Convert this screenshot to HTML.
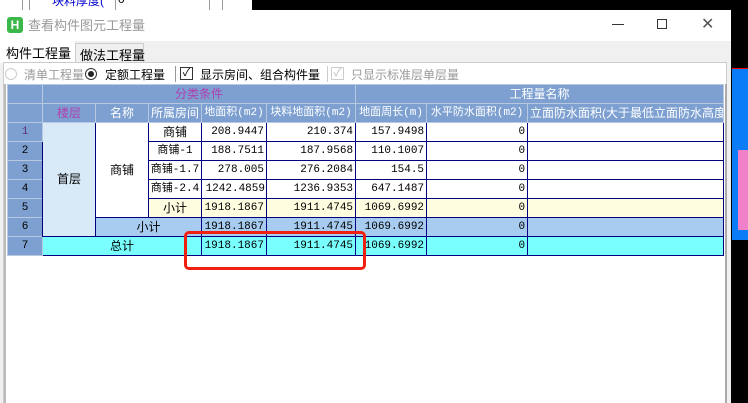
<!DOCTYPE html>
<html><head><meta charset="utf-8"><style>
*{margin:0;padding:0;box-sizing:border-box}
body{width:748px;height:403px;overflow:hidden;background:#000;position:relative;font-family:"Liberation Sans","Noto Sans CJK SC",sans-serif;font-size:12px}
.a{position:absolute}
table{border-collapse:collapse;position:absolute;left:7px;top:84px;width:716px;table-layout:fixed;font-family:"Liberation Sans","Noto Sans CJK SC",sans-serif;font-size:12px}
td{height:19px;padding:0 2px;white-space:nowrap;overflow:hidden;border:1px solid #000080;line-height:17px}
.h td{background:#7da0d0;color:#fff;border:1px solid #b8c8e0;text-align:center}
.n{background:#7da0d0!important;color:#000;text-align:center;border:1px solid #b8c8e0!important;font-family:"Liberation Mono",monospace;font-size:11px}
.r{text-align:right;font-family:"Liberation Mono",monospace;font-size:11px}
.c{text-align:center}
.m{font-family:"Liberation Mono","Noto Sans CJK SC",monospace;font-size:11px}
.y td{background:#fffde0}
.b td{background:#a8ccf0}
.t td{background:#7affff}
</style></head><body>
<div class="a" style="left:0;top:0;width:252px;height:10px;background:#fff;overflow:hidden">
<div class="a" style="left:22px;top:0;width:1px;height:10px;background:#999"></div>
<div class="a" style="left:29px;top:0;width:1px;height:10px;background:#999"></div>
<div class="a" style="left:52px;top:-8px;color:#00c;font-size:12px">块料厚度(</div>
<div class="a" style="left:115px;top:0;width:1px;height:10px;background:#999"></div>
<div class="a" style="left:118px;top:-8px;font-size:12px">0</div>
<div class="a" style="left:209px;top:0;width:1px;height:10px;background:#999"></div>
<div class="a" style="left:222px;top:0;width:1px;height:10px;background:#999"></div>
</div>
<div class="a" style="left:732px;top:68px;width:16px;height:172px;background:#0a7cf8;border-top:1px solid #f00"></div>
<div class="a" style="left:738px;top:150px;width:10px;height:80px;background:#f080c8"></div>
<div class="a" style="left:0;top:10px;width:731px;height:393px;background:#fff">
<div class="a" style="left:7px;top:7px;width:16px;height:16px;background:#3cb84a;border-radius:3px;color:#fff;font-weight:bold;font-size:12px;text-align:center;line-height:16px">H</div>
<div class="a" style="left:28px;top:5px;color:#999;font-size:13px">查看构件图元工程量</div>
<div class="a" style="left:612px;top:14px;width:12px;height:1px;background:#333"></div>
<div class="a" style="left:657px;top:9px;width:10px;height:10px;border:1px solid #333"></div>
<div class="a" style="left:701px;top:4px;font-size:16px;color:#555">✕</div>
<div class="a" style="left:0;top:31px;width:731px;height:362px;background:#f0f0f0"></div>
<div class="a" style="left:0;top:31px;width:75px;height:22px;background:#fff"></div>
<div class="a" style="left:6px;top:33px;font-size:13px">构件工程量</div>
<div class="a" style="left:75px;top:33px;width:69px;height:20px;border:1px solid #ccc;background:#f0f0f0"></div>
<div class="a" style="left:80px;top:35px;font-size:13px">做法工程量</div>
<div class="a" style="left:3px;top:52px;width:724px;height:341px;background:#fff;border:1px solid #ccc;border-bottom:none"></div>
<div class="a" style="left:5px;top:58px;width:12px;height:12px;border:1px solid #ccc;border-radius:50%"></div>
<div class="a" style="left:24px;top:56px;color:#999;font-size:12px">清单工程量</div>
<div class="a" style="left:85px;top:58px;width:12px;height:12px;border:1px solid #333;border-radius:50%"><div style="margin:2px;width:6px;height:6px;background:#222;border-radius:50%"></div></div>
<div class="a" style="left:105px;top:56px;font-size:12px">定额工程量</div>
<div class="a" style="left:175px;top:56px;width:1px;height:16px;background:#999"></div>
<div class="a" style="left:180px;top:57px;width:13px;height:13px;border:1px solid #333;font-size:11px;line-height:11px;text-align:center">✓</div>
<div class="a" style="left:200px;top:56px;font-size:12px">显示房间、组合构件量</div>
<div class="a" style="left:327px;top:56px;width:1px;height:16px;background:#ccc"></div>
<div class="a" style="left:331px;top:57px;width:13px;height:13px;border:1px solid #ccc;color:#bbb;font-size:11px;line-height:11px;text-align:center">✓</div>
<div class="a" style="left:351px;top:56px;color:#999;font-size:12px">只显示标准层单层量</div>
<div class="a" style="left:725px;top:74px;width:2px;height:319px;background:#aaa"></div>
<div class="a" style="left:4px;top:74px;width:2px;height:319px;background:#bbb"></div>
</div>
<table>
<colgroup><col style="width:35px"><col style="width:53px"><col style="width:53px"><col style="width:53px"><col style="width:65px"><col style="width:89px"><col style="width:71px"><col style="width:101px"><col style="width:196px"></colgroup>
<tr class="h"><td></td><td colspan="5" style="color:#b040b0">分类条件</td><td colspan="3">工程量名称</td></tr>
<tr class="h"><td></td><td style="color:#b040b0">楼层</td><td>名称</td><td>所属房间</td><td class="m" style="padding:0">地面积(m2)</td><td class="m" style="padding:0">块料地面积(m2)</td><td class="m" style="padding:0">地面周长(m)</td><td class="m" style="padding:0">水平防水面积(m2)</td><td style="text-align:left">立面防水面积(大于最低立面防水高度</td></tr>
<tr><td class="n" style="color:#603080">1</td><td rowspan="6" class="c" style="background:#d8eaf8">首层</td><td rowspan="5" class="c">商铺</td><td class="c">商铺</td><td class="r">208.9447</td><td class="r">210.374</td><td class="r">157.9498</td><td class="r">0</td><td></td></tr>
<tr><td class="n">2</td><td class="c m">商铺-1</td><td class="r">188.7511</td><td class="r">187.9568</td><td class="r">110.1007</td><td class="r">0</td><td></td></tr>
<tr><td class="n">3</td><td class="c m" style="padding:0">商铺-1.7</td><td class="r">278.005</td><td class="r">276.2084</td><td class="r">154.5</td><td class="r">0</td><td></td></tr>
<tr><td class="n">4</td><td class="c m" style="padding:0">商铺-2.4</td><td class="r" style="padding:0 1px">1242.4859</td><td class="r">1236.9353</td><td class="r">647.1487</td><td class="r">0</td><td></td></tr>
<tr class="y"><td class="n">5</td><td class="c">小计</td><td class="r">1918.1867</td><td class="r">1911.4745</td><td class="r">1069.6992</td><td class="r">0</td><td></td></tr>
<tr class="b"><td class="n">6</td><td colspan="2" class="c">小计</td><td class="r">1918.1867</td><td class="r">1911.4745</td><td class="r">1069.6992</td><td class="r">0</td><td></td></tr>
<tr class="t"><td class="n">7</td><td colspan="3" class="c">总计</td><td class="r">1918.1867</td><td class="r">1911.4745</td><td class="r">1069.6992</td><td class="r">0</td><td></td></tr>
</table>
<div class="a" style="left:184px;top:231px;width:182px;height:39px;border:3px solid #f02010;border-radius:5px"></div>
</body></html>
